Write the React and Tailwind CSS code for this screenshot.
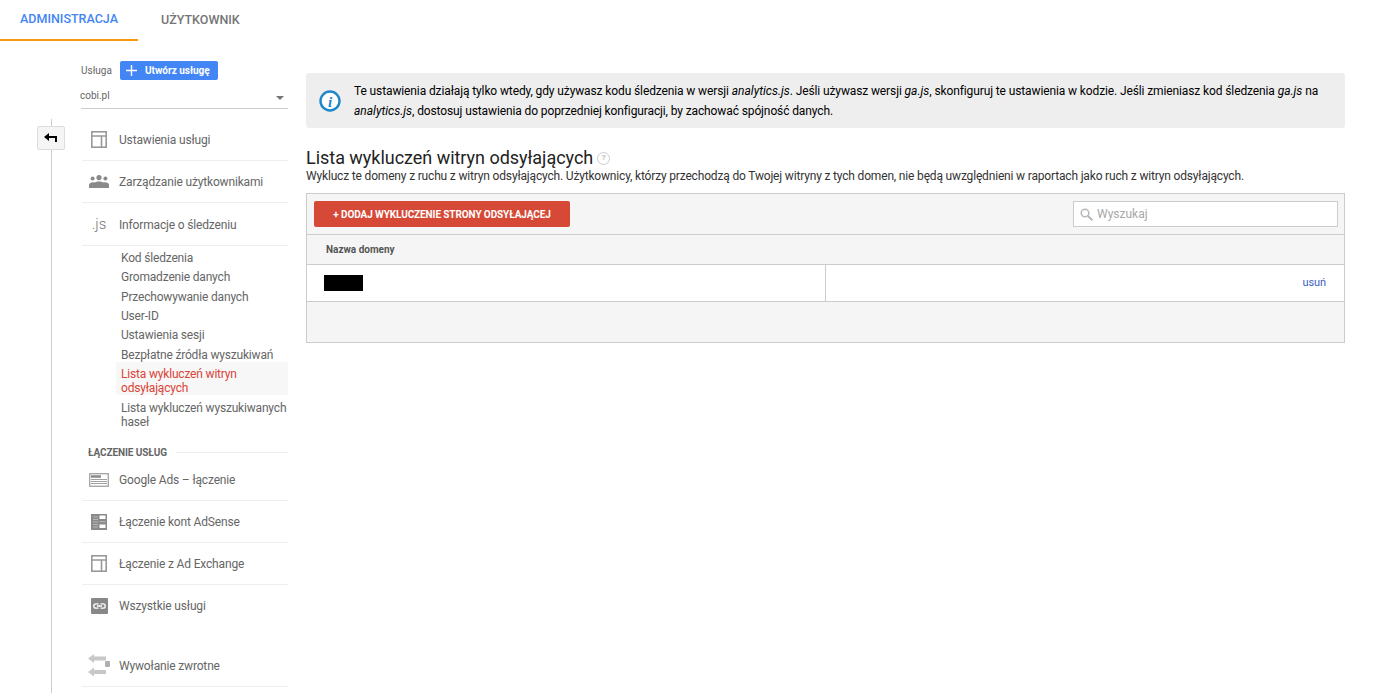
import React from "react";

const Row = ({ icon, label, border = true, h = "h-[42px]" }) => (
  <div className={`${h} flex items-center ${border ? "border-b border-[#eeeeee]" : ""}`}>
    <div className="w-[37px] flex justify-center shrink-0 pr-[3px]">{icon}</div>
    <span className="text-[12px] tracking-[-0.16px] text-[#666666]">{label}</span>
  </div>
);

const PanelIcon = () => (
  <svg width="16" height="17" viewBox="0 0 16 17" fill="none" stroke="#999999" strokeWidth="1.6">
    <rect x="0.8" y="0.8" width="14.4" height="15.4" />
    <path d="M1 5h14M10.5 5v11" />
  </svg>
);
const PeopleIcon = () => (
  <svg width="20" height="13" viewBox="0 0 20 13" fill="#8a8a8a">
    <circle cx="10" cy="2.6" r="2.6" />
    <circle cx="3.6" cy="3.6" r="2" />
    <circle cx="16.4" cy="3.6" r="2" />
    <path d="M0 13v-3.2c0-1.6 2-2.6 4-2.6 .8 0 1.5.1 2 .3.9-.6 2.4-.9 4-.9s3.100.3 4 .9c.5-.2 1.200-.3 2-.3 2 0 4 1 4 2.600V13z" />
  </svg>
);
const AdsIcon = () => (
  <svg width="20" height="14" viewBox="0 0 20 14" fill="none">
    <rect x="0.7" y="0.7" width="18.6" height="12.600" fill="#ffffff" stroke="#a8a8a8" strokeWidth="1.400" />
    <path d="M2 3.500h10" stroke="#8a8a8a" strokeWidth="2.500" />
    <path d="M2 6.500h16M2 8.500h16M2 10.500h16" stroke="#a0a0a0" />
  </svg>
);
const AdSenseIcon = () => (
  <svg width="16" height="16" viewBox="0 0 16 16">
    <rect width="16" height="16" fill="#8a8a8a" />
    <path d="M8.500 1.500h6v3.500h-6zM8.500 10.500h6v3.500h-6z" fill="#ffffff" />
    <path d="M2 3h5M2 5.500h5M2 8h5M2 10.500h5M2 13h5M8.500 7.700h6" stroke="#b8b8b8" />
  </svg>
);
const LinkIcon = () => (
  <svg width="17" height="16" viewBox="0 0 17 16">
    <rect width="17" height="16" rx="1" fill="#888888" />
    <path d="M7.500 5.800H5a2.200 2.200 0 0 0 0 4.400h2.500M9.500 5.800H12a2.200 2.200 0 0 1 0 4.400H9.500M6 8h5" stroke="#ffffff" strokeWidth="1.300" fill="none" />
  </svg>
);
const CallbackIcon = () => (
  <svg width="22" height="23" viewBox="0 0 22 23" fill="#c8c8c8">
    <path d="M0 4.500 6 0v2.500h12v4H6V9z" />
    <rect x="17" y="7" width="5" height="6" rx="1" fill="#b0b0b0" />
    <path d="M0 18 6 13.500V16h12v4H6v2.500z" />
  </svg>
);

const subItems = [
  ["Kod śledzenia", "h-[19px]"],
  ["Gromadzenie danych", "h-[20px]"],
  ["Przechowywanie danych", "h-[19px]"],
  ["User-ID", "h-[19px]"],
  ["Ustawienia sesji", "h-[20px]"],
  ["Bezpłatne źródła wyszukiwań", "h-[14px]"],
];

export default function App() {
  return (
    <div className="h-[693px] overflow-hidden bg-white font-['Roboto',sans-serif]">
      <div className="flex h-[41px] text-[12.5px] font-medium">
        <div className="w-[138px] flex items-center justify-center pb-[1px] border-b-2 border-[#f79a0e] text-[#4285f4]">ADMINISTRACJA</div>
        <div className="ml-[23px] flex items-center pb-[1px] text-[#757575]">UŻYTKOWNIK</div>
      </div>

      <div className="flex">
        {/* rail */}
        <div className="w-[81px] shrink-0 relative">
          <div className="absolute left-[51px] top-[78px] w-px bg-[#cccccc] h-[600px]" />
          <div className="absolute left-[37px] top-[85px] w-[28px] h-[24px] bg-[#f5f5f5] border border-[#dddddd] rounded-[2px] flex items-center justify-center">
            <svg width="13" height="10" viewBox="0 0 13 10" className="-mt-[1px] -ml-[2px]">
              <path d="M0 4 5 0v3h8v6h-2V5H5v3z" fill="#000000" />
            </svg>
          </div>
        </div>

        {/* sidebar */}
        <div className="w-[207px] shrink-0">
          <div className="mt-[19px] flex items-center h-[20px]">
            <span className="text-[10px] text-[#666666] w-[39px]">Usługa</span>
            <div className="w-[98px] h-[19px] bg-[#4285f4] rounded-[2px] flex items-center text-white text-[10px] font-bold">
              <svg width="11" height="11" viewBox="0 0 11 11" className="ml-[6px] mr-[8px]"><path d="M5.500 0v11M0 5.500h11" stroke="#ffffff" strokeWidth="1.400" /></svg>
              Utwórz usługę
            </div>
          </div>
          <div className="mt-[7px] h-[22px] pb-[3px] border-b border-[#cccccc] flex items-center justify-between text-[10px] text-[#666666]">
            <span className="-mt-[1px] -ml-[1px]">cobi.pl</span>
            <span className="w-0 h-0 mr-[4px] mt-[3px] border-l-[4px] border-r-[4px] border-t-[4px] border-l-transparent border-r-transparent border-t-[#757575]" />
          </div>
          <div className="ml-[1px] mt-[10px]">
            <Row icon={<PanelIcon />} label="Ustawienia usługi" />
            <Row icon={<PeopleIcon />} label="Zarządzanie użytkownikami" />
            <Row h="h-[43px] pt-[1px]" icon={<span className="text-[15px] text-[#757575] font-light">.js</span>} label="Informacje o śledzeniu" />
          </div>
          <div className="mt-[5px] text-[12px] leading-[14px] tracking-[-0.18px] text-[#666666]">
            {subItems.map(([s, h]) => (
              <div key={s} className={`pl-[40px] ${h} whitespace-nowrap`}>{s}</div>
            ))}
            <div className="ml-[35px] pl-[5px] bg-[#f7f7f7] text-[#db4437] pt-[5px] h-[33px]">Lista wykluczeń witryn odsyłających</div>
            <div className="pl-[40px] pt-[6px]">Lista wykluczeń wyszukiwanych haseł</div>
          </div>
          <div className="flex items-center mt-[16px] pl-[7px] h-[14px]">
            <span className="text-[10px] tracking-[-0.1px] font-bold text-[#666666]">ŁĄCZENIE USŁUG</span>
            <div className="flex-1 h-px bg-[#eeeeee] ml-[9px]" />
          </div>
          <div className="ml-[1px]">
            <Row icon={<AdsIcon />} label="Google Ads – łączenie" />
            <Row icon={<AdSenseIcon />} label="Łączenie kont AdSense" />
            <Row icon={<PanelIcon />} label="Łączenie z Ad Exchange" />
            <Row border={false} icon={<LinkIcon />} label="Wszystkie usługi" />
            <div className="h-[18px]" />
            <Row icon={<CallbackIcon />} label="Wywołanie zwrotne" />
          </div>
        </div>

        {/* main */}
        <div className="ml-[18px] w-[1039px] shrink-0 pt-[32px]">
          <div className="h-[55px] bg-[#eeeeee] rounded-[3px] flex items-center">
            <svg width="22" height="22" viewBox="0 0 22 22" className="ml-[13px] mr-[13px] shrink-0">
              <circle cx="11" cy="11" r="9.500" fill="#ffffff" stroke="#1e88c9" strokeWidth="2.400" />
              <text x="11" y="16.500" textAnchor="middle" fontFamily="'Liberation Serif',serif" fontStyle="italic" fontWeight="700" fontSize="15" fill="#1e88c9">i</text>
            </svg>
            <p className="text-[12px] leading-[20px] tracking-[-0.115px] text-black">
              Te ustawienia działają tylko wtedy, gdy używasz kodu śledzenia w wersji <i className="tracking-normal">analytics.js</i>. Jeśli używasz wersji <i className="tracking-normal">ga.js</i>, skonfiguruj te ustawienia w kodzie. Jeśli zmieniasz kod śledzenia <i className="tracking-normal">ga.js</i> na<br />
              <i className="tracking-normal">analytics.js</i>, dostosuj ustawienia do poprzedniej konfiguracji, by zachować spójność danych.
            </p>
          </div>
          <div className="mt-[18px] flex items-center h-[22px]">
            <h1 className="text-[18px] tracking-[-0.03px] text-[#222222] font-normal">Lista wykluczeń witryn odsyłających</h1>
            <span className="ml-[4px] mt-[2px] w-[13px] h-[13px] rounded-full border border-[#cccccc] text-[#bbbbbb] text-[8px] font-bold flex items-center justify-center">?</span>
          </div>
          <p className="text-[12px] leading-[14px] tracking-[-0.17px] mt-[1px] text-[#333333]">Wyklucz te domeny z ruchu z witryn odsyłających. Użytkownicy, którzy przechodzą do Twojej witryny z tych domen, nie będą uwzględnieni w raportach jako ruch z witryn odsyłających.</p>
          <div className="mt-[10px] border border-[#cccccc] bg-[#f5f5f5]">
            <div className="h-[41px] flex items-center justify-between pl-[7px] pr-[6px] border-b border-[#cccccc]">
              <div className="w-[256px] h-[26px] rounded-[2px] bg-[#d64937] text-white text-[10px] tracking-[-0.1px] font-bold flex items-center justify-center">+ DODAJ WYKLUCZENIE STRONY ODSYŁAJĄCEJ</div>
              <div className="w-[265px] h-[26px] bg-white border border-[#cccccc] flex items-center text-[12px] text-[#a8a8a8]">
                <svg width="13" height="13" viewBox="0 0 13 13" fill="none" stroke="#b8b8b8" strokeWidth="1.500" className="ml-[6px] mr-[4px]">
                  <circle cx="5" cy="5" r="3.800" /><path d="M8 8l4.300 4.300" strokeWidth="2" />
                </svg>
                Wyszukaj
              </div>
            </div>
            <div className="h-[30px] flex items-center pl-[19px] border-b border-[#cccccc] text-[10px] font-bold text-[#555555]">Nazwa domeny</div>
            <div className="h-[37px] flex bg-white border-b border-[#cccccc]">
              <div className="w-[519px] border-r border-[#cccccc] pl-[17px] flex items-center">
                <div className="w-[39px] h-[16px] bg-black -mt-[1px]" />
              </div>
              <div className="flex-1 flex items-center justify-end pr-[18px] pt-[1px] text-[11px] tracking-[-0.1px] text-[#3b5fc0]">usuń</div>
            </div>
            <div className="h-[40px]" />
          </div>
        </div>
      </div>
    </div>
  );
}
